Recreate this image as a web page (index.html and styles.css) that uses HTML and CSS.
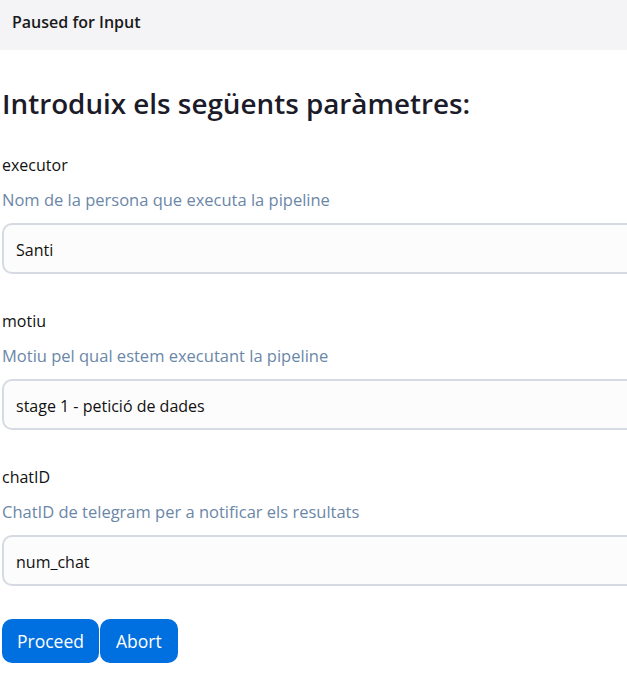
FILE: index.html
```html
<!DOCTYPE html>
<html lang="ca">
<head>
<meta charset="utf-8">
<link rel="stylesheet" href="styles.css">
</head>
<body>
<header class="topbar">Paused for Input</header>
<main class="content">
  <h1 class="title">Introduix els següents paràmetres:</h1>
  <div class="field">
    <label class="field-label">executor</label>
    <div class="field-desc">Nom de la persona que executa la pipeline</div>
    <input class="field-input" type="text" value="Santi">
  </div>
  <div class="field">
    <label class="field-label">motiu</label>
    <div class="field-desc">Motiu pel qual estem executant la pipeline</div>
    <input class="field-input" type="text" value="stage 1 - petició de dades">
  </div>
  <div class="field">
    <label class="field-label">chatID</label>
    <div class="field-desc">ChatID de telegram per a notificar els resultats</div>
    <input class="field-input" type="text" value="num_chat">
  </div>
  <div class="actions">
    <button class="btn">Proceed</button>
    <button class="btn">Abort</button>
  </div>
</main>
</body>
</html>
```
FILE: styles.css
```css
html, body {
  margin: 0;
  padding: 0;
  overflow: hidden;
  background: #ffffff;
}
body {
  font-family: "Open Sans", "Noto Sans", sans-serif;
  color: #111111;
  width: 627px;
}
.topbar {
  height: 50px;
  box-sizing: border-box;
  background: #f4f4f6;
  padding: 11px 12px 0;
  font-size: 16px;
  line-height: 22px;
  font-weight: 600;
  color: #1a1a1a;
}
.content {
  padding: 36px 0 0 2px;
  display: flex;
  flex-direction: column;
  overflow: hidden;
}
.title {
  margin: 0 0 33px;
  font-size: 27.8px;
  line-height: 34px;
  font-weight: 600;
  color: #1b1b29;
}
.field {
  display: flex;
  flex-direction: column;
  gap: 11px;
  margin-bottom: 35px;
}
.field-label {
  font-size: 16px;
  line-height: 24px;
  color: #111111;
}
.field-desc {
  font-size: 16.5px;
  line-height: 24px;
  color: #6b87a8;
}
.field-input {
  width: 700px;
  height: 51px;
  box-sizing: border-box;
  margin: 0;
  border: 2px solid #d5dae3;
  border-radius: 10px;
  background: #fcfcfc;
  padding: 2px 12px 0;
  font-family: inherit;
  font-size: 16px;
  color: #111111;
  outline: none;
}
.actions {
  display: flex;
  gap: 1px;
  margin-top: -2px;
}
.btn {
  height: 44px;
  padding: 0 15px;
  border: none;
  border-radius: 10px;
  background: #006fe0;
  color: #ffffff;
  font-family: inherit;
  font-size: 17.5px;
}
.btn + .btn {
  padding: 0 16px;
}
```
